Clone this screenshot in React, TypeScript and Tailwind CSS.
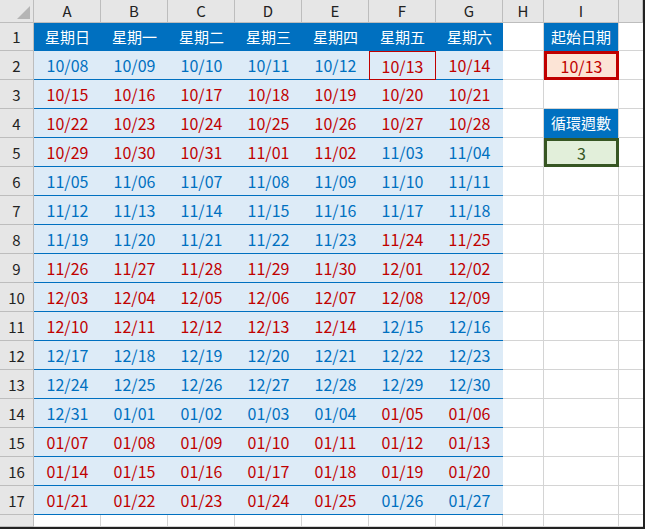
import React from "react";

const cols = ["A", "B", "C", "D", "E", "F", "G", "H", "I", ""];
const days = ["星期日", "星期一", "星期二", "星期三", "星期四", "星期五", "星期六"];

const start = new Date(2023, 9, 8);
const redStart = new Date(2023, 9, 13);

function cellDate(r: number, c: number) {
  const d = new Date(start);
  d.setDate(d.getDate() + r * 7 + c);
  const diff = Math.round((d.getTime() - redStart.getTime()) / 86400000);
  const red = diff >= 0 && Math.floor(diff / 21) % 2 === 0;
  const mm = String(d.getMonth() + 1).padStart(2, "0");
  const dd = String(d.getDate()).padStart(2, "0");
  return { text: `${mm}/${dd}`, red };
}

const font = { fontFamily: '"Noto Sans CJK TC", "Noto Sans", sans-serif' };

export default function App() {
  const cells: React.ReactNode[] = [];
  // header row
  cells.push(
    <div key="corner" className="bg-[#e6e6e6] border-r border-b border-[#bdbdbd] flex items-end justify-end p-[3px]">
      <div className="w-0 h-0 border-l-[13px] border-l-transparent border-b-[13px] border-b-[#b5b5b5]" />
    </div>
  );
  cols.forEach((c, i) => (
    cells.push(
      <div key={"h" + i} className="bg-[#e6e6e6] border-r border-b border-[#bdbdbd] flex items-center justify-center text-[15px] text-[#222]">
        {c}
      </div>
    )
  ));
  for (let r = 0; r < 18; r++) {
    cells.push(
      <div key={"r" + r} className="bg-[#e6e6e6] border-r border-b border-[#bdbdbd] flex items-end justify-center pb-[2px] text-[15px] text-[#222]">
        {r < 17 ? r + 1 : ""}
      </div>
    );
    for (let c = 0; c < 7; c++) {
      if (r === 17) {
        cells.push(<div key={`c${r}-${c}`} className="border-r border-b border-[#d4d4d4]" />);
      } else if (r === 0) {
        cells.push(
          <div key={`c${r}-${c}`} className="bg-[#0070c0] text-white flex items-center justify-center text-[15px]">
            {days[c]}
          </div>
        );
      } else {
        const { text, red } = cellDate(r - 1, c);
        const boxed = r === 1 && c === 5;
        cells.push(
          <div
            key={`c${r}-${c}`}
            className={`bg-[#ddebf7] flex items-center justify-center text-[16px] ${red ? "text-[#c00000]" : "text-[#0070c0]"} ${boxed ? "shadow-[inset_0_0_0_1px_#c00000]" : "border-b border-[#0070c0]"}`}
          >
            {text}
          </div>
        );
      }
    }
    // H
    cells.push(<div key={`h${r}`} className="border-r border-b border-[#d4d4d4]" />);
    // I
    let iCell: React.ReactNode = <div key={`i${r}`} className="border-r border-b border-[#d4d4d4]" />;
    if (r === 0 || r === 3)
      iCell = (
        <div key={`i${r}`} className="bg-[#0070c0] text-white flex items-center justify-center text-[15px] border-r border-[#d4d4d4]">
          {r === 0 ? "起始日期" : "循環週數"}
        </div>
      );
    if (r === 1)
      iCell = (
        <div key={`i${r}`} className="bg-[#fce4d6] border-[3px] border-[#c00000] text-[#c00000] flex items-center justify-center text-[16px]">
          10/13
        </div>
      );
    if (r === 4)
      iCell = (
        <div key={`i${r}`} className="bg-[#e2efda] border-[3px] border-[#375623] text-[#375623] flex items-center justify-center text-[16px]">
          3
        </div>
      );
    cells.push(iCell);
    cells.push(<div key={`j${r}`} className="border-b border-[#d4d4d4]" />);
  }

  return (
    <div
      className="w-[645px] h-[529px] overflow-hidden bg-white border-r-2 border-b-2 border-[#222] grid grid-cols-[34px_repeat(7,67px)_41px_75px_1fr] grid-rows-[23px_28px_repeat(16,29px)_1fr]"
      style={font}
    >
      {cells}
    </div>
  );
}
